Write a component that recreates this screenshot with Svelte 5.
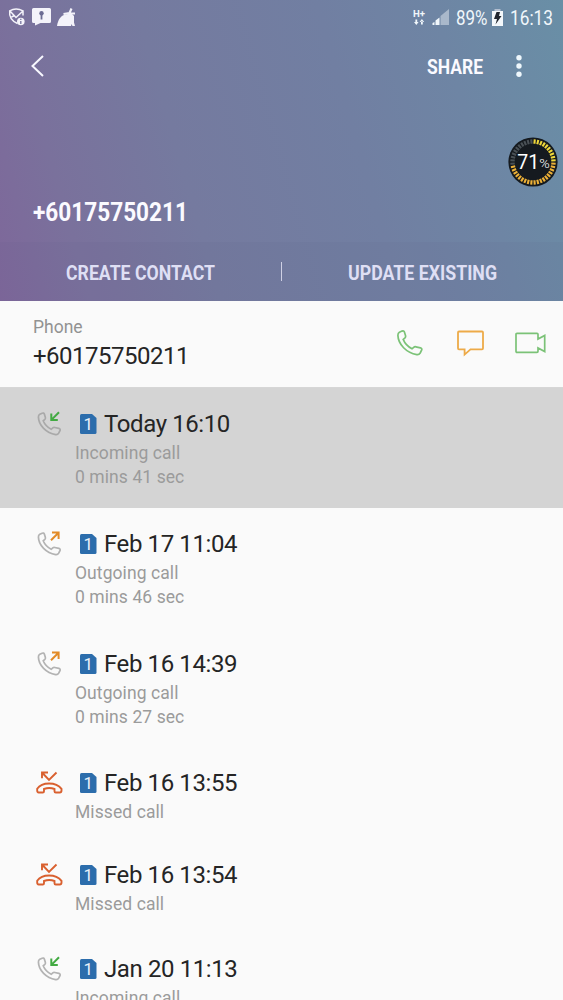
<script>
  const calls = [
    { kind: 'in', title: 'Today 16:10', label: 'Incoming call', time: '0 mins 41 sec', active: true },
    { kind: 'out', title: 'Feb 17 11:04', label: 'Outgoing call', time: '0 mins 46 sec' },
    { kind: 'out', title: 'Feb 16 14:39', label: 'Outgoing call', time: '0 mins 27 sec' },
    { kind: 'missed', title: 'Feb 16 13:55', label: 'Missed call' },
    { kind: 'missed', title: 'Feb 16 13:54', label: 'Missed call' },
    { kind: 'in', title: 'Jan 20 11:13', label: 'Incoming call', time: '' }
  ];
  const ticks = Array.from({ length: 40 }, (_, i) => i);
</script>

{#snippet condensed(text, width, size, weight)}
  <svg class="condensed" {width} height="30"><text x="0" y="22" font-size={size} font-weight={weight} textLength={width} lengthAdjust="spacingAndGlyphs">{text}</text></svg>
{/snippet}

{#snippet handset()}
  <path d="M2.4 2.3 5 1.1Q6.8.4 7.4 2L8.5 5.6Q8.9 6.9 8 7.8L6.2 9.4Q8.6 15.5 15 18.8L16.7 17.3Q17.6 16.5 18.9 16.8L23.4 17.8Q25.2 18.3 24.7 20L23.2 23Q22 25 19.8 24.6C9.5 22.8 1.2 14.5.9 5.4Q.8 3.2 2.4 2.3Z" />
{/snippet}

<div class="screen">
  <header>
    <div class="status">
      <svg width="80" height="24" viewBox="0 0 80 24" fill="none" stroke="#f4f3fa" stroke-width="1.5">
        <path d="M17.5 19.5C12 17 9 12.500 9.700 6.800Q16 3.300 23 6.800V11.500M10 7l6 6.500 7-6.500M11.500 13l3-1.500" />
        <circle cx="20.8" cy="17.500" r="3.8" fill="#f4f3fa" stroke="none" />
        <path d="M20.8 14.8v1.100m0 1v3" stroke="#7776a0" stroke-width="1.3" />
        <path d="M33.5 4h16q1.5 0 1.5 1.5v12q0 1.5-1.5 1.5h-9L35 21.5V19h-1.500q-1.5 0-1.5-1.500v-12Q32 4 33.500 4z" fill="#f4f3fa" stroke="none" />
        <circle cx="41.5" cy="9.2" r="2.2" fill="#6c6c94" stroke="none" />
        <path d="M41.5 10v5.500" stroke="#6c6c94" stroke-width="1.8" />
        <path d="M57 22C58 16 60.500 12 65 10.500L71.500 9.500 74 12v6.500l1 3.500h-2.500l-1-2-.5 2z" fill="#f4f3fa" stroke="none" />
        <path d="M63.500 10 69.500 9 71.500 4.500M68 9.500h7" stroke-width="2.2" />
      </svg>
      <div class="grow"></div>
      <svg class="network" width="38" height="22" viewBox="0 0 38 22" fill="#f1f7fb">
        <text x="0" y="12" font-size="9.5" font-weight="700" textLength="12" lengthAdjust="spacingAndGlyphs">H+</text>
        <path d="M1 17h4.600L3.300 20zM6.600 17h4.600L8.900 14zM2.400 14.500h1.800v3H2.400zM8 16.500h1.800v3H8z" />
        <path d="M19.500 20v-2l2-1v3zM22.500 20v-4.500l4-3V20z" />
        <path d="M27.500 20v-9L36 4v16z" opacity=".45" />
      </svg>
      <span class="percent">{@render condensed('89%', 31.5, 20, 400)}</span>
      <svg class="battery" width="11" height="20" viewBox="0 0 11 20">
        <path d="M2.500 1h6v2h-6z" fill="#b3bfd0" />
        <path d="M0 3h11v15H0z" fill="#f4f8fb" />
        <path d="M4.500 4H8L7 8h2.500L3.500 16.500 5 11H2z" fill="#20252e" />
      </svg>
      <span class="clock">{@render condensed('16:13', 43, 20, 400)}</span>
    </div>

    <nav>
      <svg width="18" height="26" viewBox="0 0 18 26" fill="none" stroke="#f8f8ff" stroke-width="2"><path d="M15 3 4.500 13 15 23" /></svg>
      <div class="grow"></div>
      {@render condensed('SHARE', 56, 20, 700)}
      <svg class="more" width="6" height="24" fill="#eef7fc"><circle cx="3" cy="3.8" r="2.7" /><circle cx="3" cy="12" r="2.7" /><circle cx="3" cy="20.2" r="2.7" /></svg>
    </nav>

    <div class="number">{@render condensed('+60175750211', 155, 25, 700)}</div>

    <div class="tabs">
      <div>{@render condensed('CREATE CONTACT', 149, 20, 700)}</div>
      <i></i>
      <div>{@render condensed('UPDATE EXISTING', 149, 20, 700)}</div>
    </div>

    <svg class="gauge" width="50" height="50" viewBox="-25 -25 50 50">
      <circle r="24.6" fill="#151a1f" />
      {#each ticks as i}
        <path d="M0-22.7v4.400" transform="rotate({i * 9 + 4.5})" stroke={i < 10 ? '#f0d83a' : i < 29 ? '#edb137' : '#4a5156'} stroke-width="2.1" />
      {/each}
      <text x="-15.7" y="7" font-size="19.5">71<tspan font-size="13" font-weight="300" dy="-.6" textLength="10.5" lengthAdjust="spacingAndGlyphs">%</tspan></text>
    </svg>
  </header>

  <section class="phone">
    <div class="grow">
      <p class="caption">Phone</p>
      <p class="value">+60175750211</p>
    </div>
    <svg width="26" height="26" viewBox="0 0 26 26" class="green">{@render handset()}</svg>
    <svg width="27" height="27" viewBox="0 0 27 27" class="amber"><path d="M2 1.5h23q1 0 1 1v15.8q0 1-1 1H13.5L7.6 24.6v-5.3H2q-1 0-1-1V2.5q0-1 1-1z" /></svg>
    <svg width="31" height="24" viewBox="0 0 31 24" class="green"><path d="M2 2.300h20q1 0 1 1v4.700L29.7 4.500v16L23 17V20.300q0 1-1 1H2q-1 0-1-1V3.300q0-1 1-1z" /></svg>
  </section>

  <main>
    {#each calls as call}
      <article class:active={call.active} class:short={call.kind === 'missed'}>
        {#if call.kind === 'missed'}
          <svg class="kind" width="27" height="27" viewBox="0 0 27 27" fill="none" stroke="#d9602f" stroke-width="1.9">
            <path d="M6 8.300V2.500h6M6 2.500l7 7.500 7.500-7.500" />
            <path d="M1.200 20.500v-1.700C6 11.700 20 11.700 25.500 18.800V20.500q0 2-1.700 2h-4q-1.300 0-1.300-1.300v-2.200q-5.200-2-10.500 0v2.200q0 1.300-1.300 1.300h-4Q1.200 22.500 1.200 20.500z" />
          </svg>
        {:else}
          <svg class="kind" width="27" height="27" viewBox="0 0 27 27" fill="none">
            <g transform="translate(1.6 2.2) scale(.91)" stroke={call.active ? '#a9a9a9' : '#b3b3b3'} stroke-width="1.9">{@render handset()}</g>
            {#if call.kind === 'in'}
              <path d="M23 2.300 15.700 9.600M15.300 3.500V10h6.500" stroke="#42aa42" stroke-width="2" />
            {:else}
              <path d="M15 10.300 22.500 2.800M16 2.500h6.600v6.600" stroke="#e28b28" stroke-width="2" />
            {/if}
          </svg>
        {/if}
        <div class="details">
          <div class="title">
            <svg width="17" height="20" viewBox="0 0 17 20"><path d="M1.500 0H12l4.500 4v14.500q0 1.500-1.500 1.500h-13.500Q0 20 0 18.500v-17Q0 0 1.500 0z" fill="#2c6dac" /><text x="3.4" y="16" font-size="17" fill="#e8f2fa">1</text></svg>
            <span>{call.title}</span>
          </div>
          <p>{call.label}</p>
          {#if call.time}<p>{call.time}</p>{/if}
        </div>
      </article>
    {/each}
  </main>
</div>

<style>
  :global(body) { background: #fafafa; }
  .screen { width: 563px; height: 1000px; overflow: hidden; background: #fafafa; font-family: Roboto, sans-serif; }
  svg { display: block; flex: none; }
  p { margin: 0; }
  .grow { flex: 1; }
  .condensed { overflow: visible; fill: currentColor; }
  header {
    position: relative; height: 301px; display: flex; flex-direction: column; color: #fbfaff;
    background: linear-gradient(74deg, #7e679a 0%, #7a719c 14%, #757a9f 34%, #717fa2 62%, #6e85a4 80%, #698fa6 100%);
  }
  .status { display: flex; height: 36px; color: #f1f7fb; }
  .status > svg:first-child { margin-top: 4px; }
  .status > .network { margin: 5px 0 0; }
  .percent { margin: 3px 0 0 5px; }
  .status > .battery { margin: 8px 7px 0 5px; }
  .clock { margin: 3px 10px 0 0; }
  nav { height: 60px; display: flex; align-items: center; padding: 0 41px 0 28px; }
  nav > .condensed { margin-top: 1px; }
  nav .more { margin-left: 33px; }
  .number { padding: 103px 0 0 33px; height: 43px; }
  .tabs { display: flex; align-items: center; height: 59px; background: rgba(90, 80, 130, .07); color: #dfdff4; }
  .tabs div { flex: 1; display: flex; justify-content: center; padding-top: 3px; }
  .tabs i { width: 1px; height: 19px; background: #cfd0e4; }
  .gauge { position: absolute; left: 508px; top: 137px; fill: #fff; }
  .phone { height: 87px; display: flex; align-items: center; padding: 0 17px 2px 33px; border-bottom: 1px solid #d6d6d6; box-sizing: border-box; }
  .caption { font-size: 17.5px; line-height: 25px; color: #929292; }
  .value { font-size: 24px; line-height: 32px; color: #252525; letter-spacing: -.5px; }
  .green { fill: none; stroke: #7bc277; stroke-width: 1.7; }
  .amber { fill: none; stroke: #edaa48; stroke-width: 1.8; margin: 0 31px 0 34px; }
  article { height: 120px; box-sizing: border-box; padding: 20px 0 0 36px; display: flex; }
  article.active { background: #d4d4d4; }
  article:nth-child(3) { height: 119px; }
  article.short { height: 92px; }
  article:nth-child(5) { height: 94px; }
  .kind { margin-top: 2px; }
  .short .kind { margin-top: 3px; }
  .details { margin-left: 12px; }
  .title { display: flex; align-items: center; gap: 7px; margin-left: 5px; height: 32px; margin-bottom: 1px; font-size: 24px; letter-spacing: -.4px; color: #252525; white-space: nowrap; }
  .details p { font-size: 17.5px; line-height: 24px; color: #9b9b9b; letter-spacing: .08px; }
</style>
